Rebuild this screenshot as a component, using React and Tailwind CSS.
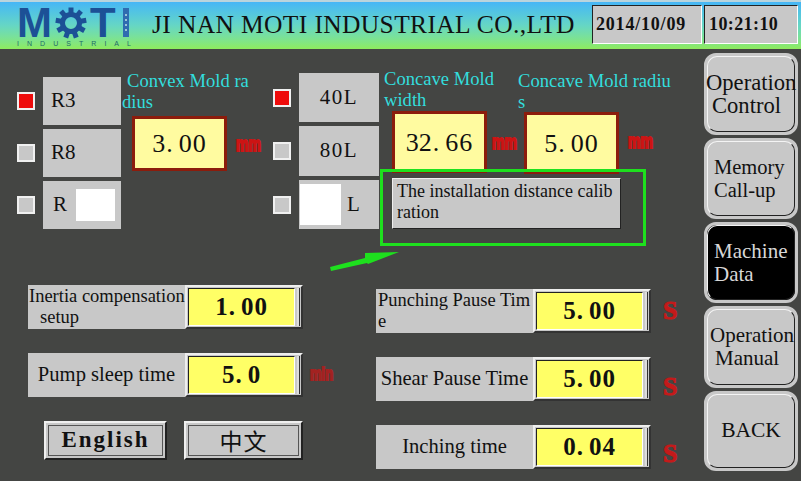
const serif = "font-['Liberation_Serif',serif]"

function Gear() {
  const teeth = [0, 40, 80, 120, 160, 200, 240, 280, 320]
  return (
    <svg width="32" height="32" viewBox="0 0 32 32" className="mt-[5px] ml-[3px] shrink-0">
      {teeth.map((a) => (
        <rect key={a} x="13.5" y="0.5" width="5" height="8" fill="#1c5096" transform={`rotate(${a} 16 16)`} />
      ))}
      <circle cx="16" cy="16" r="8.5" fill="none" stroke="#1c5096" strokeWidth="5" />
    </svg>
  )
}

function Logo() {
  return (
    <div className="ml-[17px] w-[114px] shrink-0 font-['Liberation_Sans',sans-serif] text-[#1c5096]">
      <div className="flex h-[37px] items-start">
        <span className="mt-[6px] text-[42px] font-bold leading-[29px]">M</span>
        <Gear />
        <span className="ml-[3px] mt-[6px] text-[42px] font-bold leading-[29px]">T</span>
        <div className="ml-[7px] mt-[6px] flex h-[29px] w-[6px] flex-col justify-center gap-[3px] bg-[#2f6cb0] px-[2px]">
          <span className="h-[2px] bg-[#9cc4d8]"></span>
          <span className="h-[2px] bg-[#9cc4d8]"></span>
          <span className="h-[2px] bg-[#9cc4d8]"></span>
          <span className="h-[2px] bg-[#9cc4d8]"></span>
        </div>
      </div>
      <div className="flex h-[9px] justify-between text-[7px] leading-[9px] text-[#1f6a6a]">
        {"INDUSTRIAL".split("").map((c, i) => (
          <span key={i}>{c}</span>
        ))}
      </div>
    </div>
  )
}

function Header() {
  return (
    <header className={`flex h-[49px] items-start border-t-2 border-[#b9d4dd] bg-linear-to-b from-[#46b6f6] via-[#66d6c4] to-[#8eeb5c] ${serif}`}>
      <Logo />
      <h1 className="ml-[21px] mt-[8px] w-[440px] shrink-0 whitespace-nowrap text-[25.5px] font-normal leading-[30px] tracking-[0.37px] text-[#111]">
        JI NAN MOTI INDUSTRIAL CO.,LTD
      </h1>
      <div className="mt-[3px] flex h-[39px] w-[110px] shrink-0 items-center border border-b-white border-l-[#222] border-r-white border-t-[#222] bg-[#c8c8c8] pl-[3px] text-[18px] font-bold tracking-[0.8px] text-[#111]">
        2014/10/09
      </div>
      <div className="ml-[2px] mt-[3px] flex h-[39px] w-[94px] shrink-0 items-center border border-b-white border-l-[#222] border-r-white border-t-[#222] bg-[#c8c8c8] pl-[4px] text-[18px] font-bold tracking-[0.4px] text-[#111]">
        10:21:10
      </div>
    </header>
  )
}

function Radio({ on }) {
  return <span className={`h-[18px] w-[18px] shrink-0 border-2 border-[#f0f0f0] ${on ? "bg-[#ee0b0b]" : "bg-[#c8c8c8]"}`}></span>
}

function Value({ text, bold }) {
  const [a, b] = text.split(".")
  return (
    <span className={`${serif} whitespace-nowrap text-[#111] ${bold ? "text-[25px] font-bold" : "text-[26px]"}`}>
      {a}
      <span className="ml-[1px] mr-[6px]">.</span>
      <span className="tracking-[1px]">{b}</span>
    </span>
  )
}

function MoldInput({ text, className }) {
  return (
    <div className={`flex w-[95px] items-center justify-center border-[3px] border-[#8c1c0c] bg-[#fffba0] ${className}`}>
      <Value text={text} />
    </div>
  )
}

function Unit({ children, className }) {
  return (
    <span className={`inline-block scale-y-[1.4] font-['Liberation_Sans',sans-serif] text-[14px] font-bold leading-[14px] text-[#cc1414] [-webkit-text-stroke:1.5px_#cc1414] ${className}`}>
      {children}
    </span>
  )
}

function PresetButton({ className, children, h = "h-[48px]" }) {
  return (
    <div className={`flex items-center bg-[#c8c8c8] text-[21px] text-[#111] ${h} ${className}`}>{children}</div>
  )
}

function CyanLabel({ children, className }) {
  return <div className={`text-[18.6px] leading-[21px] text-[#33dddd] ${className}`}>{children}</div>
}

function TopSection() {
  return (
    <div className="flex h-[200px] items-start pl-[17px]">
      <div className="mt-[28px] flex w-[104px] shrink-0 flex-col gap-[4px]">
        <div className="flex items-center gap-[8px]">
          <Radio on />
          <PresetButton className="w-[78px] pl-[8px]">R3</PresetButton>
        </div>
        <div className="flex items-center gap-[8px]">
          <Radio />
          <PresetButton className="w-[78px] pl-[8px]">R8</PresetButton>
        </div>
        <div className="flex items-center gap-[8px]">
          <Radio />
          <PresetButton className="w-[78px] pl-[10px]">
            R
            <span className="ml-[9px] h-[32px] w-[39px] bg-white"></span>
          </PresetButton>
        </div>
      </div>

      <div className="ml-[1px] mt-[21px] w-[151px] shrink-0">
        <CyanLabel>
          <span className="block pl-[5px]">Convex Mold ra</span>
          <span className="block">dius</span>
        </CyanLabel>
        <div className="ml-[10px] mt-[4px] flex items-center">
          <MoldInput text="3.00" className="h-[55px]" />
          <Unit className="ml-[9px]">mm</Unit>
        </div>
      </div>

      <div className="mt-[24px] flex w-[107px] shrink-0 flex-col gap-[4px]">
        <div className="flex items-center gap-[8px]">
          <Radio on />
          <PresetButton className="w-[80px] justify-center tracking-[1.5px]" h="h-[49px]">40L</PresetButton>
        </div>
        <div className="flex items-center gap-[8px]">
          <Radio />
          <PresetButton className="w-[80px] justify-center tracking-[1.5px]" h="h-[50px]">80L</PresetButton>
        </div>
        <div className="flex items-center gap-[8px]">
          <Radio />
          <PresetButton className="w-[80px] pl-[1px]" h="h-[49px]">
            <span className="mr-[6px] h-[41px] w-[41px] bg-white"></span>L
          </PresetButton>
        </div>
      </div>

      <div className="ml-[4px] mt-[19px] w-[134px] shrink-0">
        <CyanLabel>
          <span className="block">Concave Mold</span>
          <span className="block">width</span>
        </CyanLabel>
        <div className="ml-[8px] mt-[1px] flex items-center">
          <MoldInput text="32.66" className="h-[62px]" />
          <Unit className="ml-[5px]">mm</Unit>
        </div>
      </div>

      <div className="mt-[21px] w-[160px] shrink-0">
        <CyanLabel>
          <span className="block whitespace-nowrap">Concave Mold radiu</span>
          <span className="block">s</span>
        </CyanLabel>
        <div className="ml-[6px] flex items-start">
          <MoldInput text="5.00" className="h-[62px]" />
          <Unit className="ml-[9px] mt-[22px]">mm</Unit>
        </div>
      </div>
    </div>
  )
}

function BevelInput({ text }) {
  return (
    <div className="flex h-[44px] w-[118px] shrink-0 border-2 border-b-[#333] border-l-[#eee] border-r-[#333] border-t-[#eee] bg-[#c8c8c8] p-[1px]">
      <div className="flex flex-1 items-center justify-center border border-b-white border-l-[#222] border-r-white border-t-[#222] bg-[#ffff66]">
        <Value text={text} bold />
      </div>
      <span className="ml-[2px] w-[3px] border-r border-[#333] bg-[#ddd]"></span>
    </div>
  )
}

function ParamRow({ children, value, align = "justify-center", unit }) {
  return (
    <div className="flex h-[44px] items-center">
      <div className={`flex h-full w-[157px] shrink-0 items-center bg-[#c8c8c8] text-[18.5px] leading-[21px] text-[#111] ${align}`}>
        <div className="whitespace-nowrap">{children}</div>
      </div>
      <BevelInput text={value} />
      {unit}
    </div>
  )
}

function BigS({ className }) {
  return (
    <span className={`ml-[12px] text-[26px] font-bold leading-[26px] text-[#c41a1a] [-webkit-text-stroke:1px_#c41a1a] ${className}`}>S</span>
  )
}

function LangButton({ className, children }) {
  return (
    <div className={`flex h-[39px] items-center justify-center border-2 border-b-[#222] border-l-[#f0f0f0] border-r-[#222] border-t-[#f0f0f0] bg-[#c8c8c8] outline-1 outline-offset-[-5px] outline-[#555] text-[#111] ${className}`}>
      {children}
    </div>
  )
}

function BottomSection() {
  return (
    <div className="flex items-start">
      <div className="ml-[28px] mt-[36px] w-[348px] shrink-0">
        <div className="flex flex-col gap-[24px]">
          <ParamRow value="1.00" align="justify-start">
            <span className="block pl-[1px]">Inertia compensation</span>
            <span className="block pl-[12px]">setup</span>
          </ParamRow>
          <ParamRow
            value="5.0"
            unit={<Unit className="ml-[7px] mb-[2px] !text-[13px] opacity-70">min</Unit>}
          >
            <span className="text-[20.6px]">Pump sleep time</span>
          </ParamRow>
        </div>
        <div className="mt-[24px] flex">
          <LangButton className="ml-[16px] w-[123px] text-[23px] font-bold tracking-[2px]">English</LangButton>
          <LangButton className="ml-[17px] w-[119px] font-['Noto_Sans_CJK_SC',sans-serif] text-[23px] tracking-[1px]">中文</LangButton>
        </div>
      </div>

      <div className="mt-[40px] flex flex-col gap-[24px]">
        <ParamRow value="5.00" align="justify-start" unit={<BigS />}>
          <span className="block pl-[2px]">Punching Pause Tim</span>
          <span className="block pl-[2px]">e</span>
        </ParamRow>
        <ParamRow value="5.00" unit={<BigS className="mt-[16px]" />}>
          <span className="text-[20.6px]">Shear Pause Time</span>
        </ParamRow>
        <ParamRow value="0.04" unit={<BigS className="mt-[14px]" />}>
          <span className="text-[20.6px]">Inching time</span>
        </ParamRow>
      </div>
    </div>
  )
}

function Callout() {
  return (
    <>
      <div className="absolute left-[380px] top-[120px] h-[77px] w-[266px] border-[3px] border-[#1ee01e] pl-[9px] pt-[6px]">
        <div className="h-[51px] w-[229px] border border-b-[#222] border-l-[#eee] border-r-[#222] border-t-[#eee] bg-[#c8c8c8] pl-[4px] pt-[2px] text-[18px] leading-[21px] text-[#111]">
          <span className="block whitespace-nowrap">The installation distance calib</span>
          <span className="block">ration</span>
        </div>
      </div>
      <svg width="76" height="24" viewBox="0 0 76 24" className="absolute left-[328px] top-[200px]">
        <path d="M2 18 L37 9 L37 4 L71 3 L40 15 L39 14 L3 22 Z" fill="#1ee01e" />
      </svg>
    </>
  )
}

function NavButton({ lines, active, className, h }) {
  return (
    <div className={`${h} rounded-[12px] border-[3px] border-[#c8c8c8] ${active ? "bg-black" : "bg-[#c8c8c8]"}`}>
      <div className={`flex h-full flex-col justify-center rounded-[10px] border border-[#222] border-l-[#f4f4f4] border-t-[#f4f4f4] leading-[23px] ${active ? "text-[#d8d8d8]" : "text-[#111]"} ${className}`}>
        {lines.map(([text, indent]) => (
          <span key={text} className={`block whitespace-nowrap ${indent}`}>{text}</span>
        ))}
      </div>
    </div>
  )
}

function Sidebar() {
  return (
    <aside className="flex w-[94px] shrink-0 flex-col gap-[3px] pt-[4px]">
      <NavButton h="h-[82px]" lines={[["Operation", "-ml-[2px]"], ["Control", "pl-[4px]"]]} className="text-[22.6px]" />
      <NavButton h="h-[81px]" lines={[["Memory", ""], ["Call-up", ""]]} className="pl-[6px] text-[20.5px]" />
      <NavButton h="h-[81px]" lines={[["Machine", ""], ["Data", ""]]} active className="pl-[6px] text-[21px]" />
      <NavButton h="h-[82px]" lines={[["Operation", "pl-[2px]"], ["Manual", "pl-[7px]"]]} className="text-[21px]" />
      <NavButton h="h-[80px]" lines={[["BACK", ""]]} className="items-center pb-[2px] text-[21.5px]" />
    </aside>
  )
}

export default function App() {
  return (
    <div className={`h-[481px] w-[801px] overflow-hidden bg-[#444543] ${serif}`}>
      <Header />
      <div className="flex">
        <main className="relative w-[704px] shrink-0">
          <TopSection />
          <BottomSection />
          <Callout />
        </main>
        <Sidebar />
      </div>
    </div>
  )
}
